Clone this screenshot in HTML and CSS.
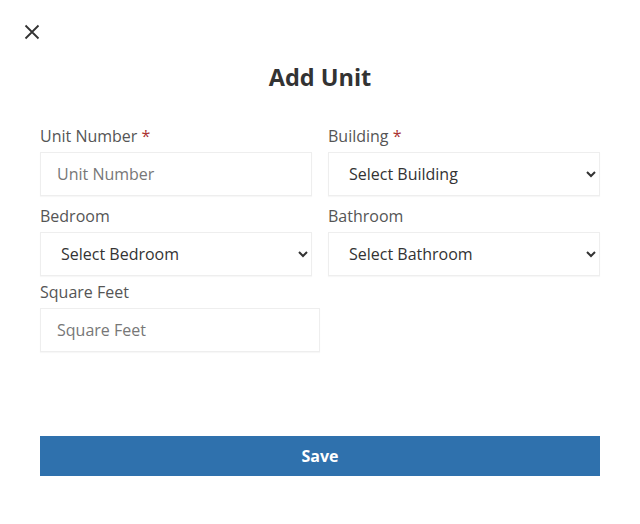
FILE: index.html
```html
<!DOCTYPE html>
<html>
<head>
    <title>Add Unit</title>
    <link rel="stylesheet" href="styles.css">
</head>
<body>
    <div class="modal">
        <button class="close-btn" aria-label="Close">
            <svg width="16" height="16" viewBox="0 0 16 16">
                <path d="M1.5 1.5 L14.5 14.5 M14.5 1.5 L1.5 14.5" stroke="#333" stroke-width="1.8" fill="none"/>
            </svg>
        </button>
        <h1 class="title">Add Unit</h1>
        <form class="unit-form">
            <div class="form-grid">
                <div class="field">
                    <label>Unit Number <span class="req">*</span></label>
                    <input type="text" placeholder="Unit Number">
                </div>
                <div class="field">
                    <label>Building <span class="req">*</span></label>
                    <select>
                        <option>Select Building</option>
                    </select>
                </div>
                <div class="field">
                    <label>Bedroom</label>
                    <select>
                        <option>Select Bedroom</option>
                    </select>
                </div>
                <div class="field">
                    <label>Bathroom</label>
                    <select>
                        <option>Select Bathroom</option>
                    </select>
                </div>
                <div class="field field-wide">
                    <label>Square Feet</label>
                    <input type="text" placeholder="Square Feet">
                </div>
            </div>
            <button type="button" class="save-btn">Save</button>
        </form>
    </div>
</body>
</html>
```

FILE: styles.css
```css
body {
    margin: 0;
    background-color: #fff;
    font-family: "Open Sans", Arial, sans-serif;
    color: #333;
}
.modal {
    padding: 20px 40px;
}
.close-btn {
    display: block;
    margin-left: -20px;
    width: 24px;
    height: 24px;
    padding: 4px;
    border: none;
    background: none;
    cursor: pointer;
}
.title {
    margin: 18px 0 32px;
    text-align: center;
    font-size: 23.5px;
    font-weight: 700;
    line-height: 30px;
    color: #333;
}
.form-grid {
    display: grid;
    grid-template-columns: 272px 272px;
    column-gap: 16px;
    row-gap: 8px;
}
.field label {
    display: block;
    margin-bottom: 4px;
    font-size: 16px;
    line-height: 24px;
    color: #555;
}
.field-wide {
    margin-top: -4px;
}
.field-wide input {
    width: 280px;
}
.req {
    color: #a33;
}
input, select {
    box-sizing: border-box;
    width: 100%;
    height: 44px;
    padding: 0 16px;
    border: 1px solid #eee;
    border-radius: 0;
    background-color: #fff;
    box-shadow: 0 1px 1px rgba(0, 0, 0, 0.03);
    font-family: "Open Sans", Arial, sans-serif;
    font-size: 16px;
    color: #333;
    outline: none;
}
input::placeholder {
    color: #777;
}
.save-btn {
    display: block;
    width: 100%;
    height: 40px;
    margin-top: 84px;
    border: none;
    background-color: #2f71ad;
    color: #fff;
    font-family: "Open Sans", Arial, sans-serif;
    font-size: 16px;
    font-weight: 700;
    cursor: pointer;
}
```
